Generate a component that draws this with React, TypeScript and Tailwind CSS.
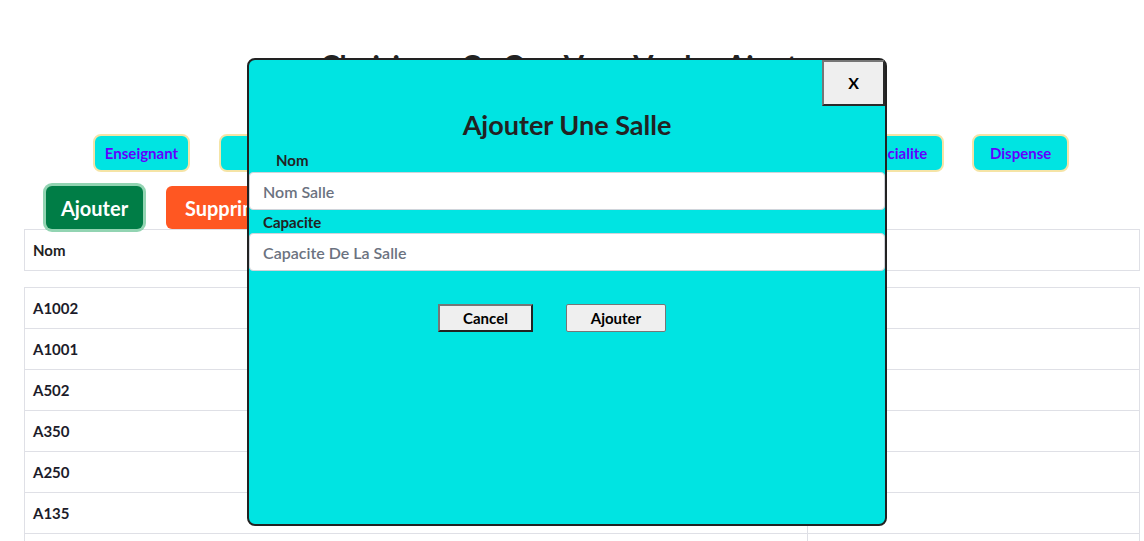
import React from 'react'

const navItems = ["Enseignant", "Salle", "Module", "Groupe", "Section", "Niveau", "Specialite", "Dispense"];

const salles = [
    ["A1002", "60"],
    ["A1001", "60"],
    ["A502", "40"],
    ["A350", "35"],
    ["A250", "30"],
    ["A135", "25"],
    ["A120", "20"],
];

const App = () => {
    return (
        <div className="relative w-full h-[541px] overflow-hidden bg-white text-[#222] font-['Lato','Noto_Sans',sans-serif]">
            <h1 className="pt-[45px] text-center text-[29px] leading-[40px] font-bold">Choisissez Ce Que Vous Voulez Ajouter</h1>

            <div className="flex gap-[28.6px] pl-[93px] mt-[49px]">
                {navItems.map((item) => (
                    <button key={item} className="w-[97px] h-[38px] rounded-lg border-2 border-[#f5e4a6] bg-[#00e4e2] text-[15px] font-bold text-[#6200ff]">
                        {item}
                    </button>
                ))}
            </div>

            <div className="flex gap-[23px] pl-[46px] mt-[14px]">
                <button className="w-[97px] h-[43px] rounded-md bg-[#007d46] text-white text-[20px] font-bold shadow-[0_0_0_3px_#92d4b2]">Ajouter</button>
                <button className="w-[130px] h-[43px] rounded-md bg-[#ff5722] text-white text-[20px] font-bold">Supprimer</button>
            </div>

            <div className="ml-[24px] w-[1116px]">
                <div className="flex h-[42px] border border-[#dfe0e6] text-[15px] font-bold items-center">
                    <div className="w-[783px] h-full flex items-center px-[8px] border-r border-[#dfe0e6]">Nom</div>
                    <div className="flex-1 px-[8px]">Capacite</div>
                </div>
                <div className="mt-[16px] border-t border-x border-[#dfe0e6]">
                    {salles.map(([nom, cap]) => (
                        <div key={nom} className="flex h-[41px] border-b border-[#dfe0e6] text-[15px] font-bold text-[#1c1c2a]">
                            <div className="w-[783px] flex items-center px-[8px] border-r border-[#dfe0e6]">{nom}</div>
                            <div className="flex-1 flex items-center px-[8px]">{cap}</div>
                        </div>
                    ))}
                </div>
            </div>

            <div className="absolute left-[247px] top-[58px] w-[640px] h-[468px] rounded-lg border-2 border-[#222] bg-[#00e4e2]">
                <button className="absolute top-0 right-0 w-[63px] h-[46px] bg-[#efefef] border-2 border-[#767676] border-r-[#2a2a2a] border-b-[#2a2a2a] text-[16px] font-bold text-black">
                    X
                </button>
                <h2 className="mt-[49px] text-center text-[27px] leading-[32px] font-bold">Ajouter Une Salle</h2>
                <div className="pl-[27px] mt-[9px] text-[15px] leading-[20px] font-bold">Nom</div>
                <input
                    placeholder="Nom Salle"
                    className="block w-full h-[38px] mt-[2px] px-[13px] rounded bg-white border border-[#cfd4da] text-[16px] font-semibold placeholder:text-[#6b7280] outline-none"
                />
                <div className="pl-[14px] mt-[1px] text-[15px] leading-[22px] font-bold">Capacite</div>
                <input
                    placeholder="Capacite De La Salle"
                    className="block w-full h-[38px] px-[13px] rounded bg-white border border-[#cfd4da] text-[16px] font-semibold placeholder:text-[#6b7280] outline-none"
                />
                <div className="flex gap-[33px] pl-[189px] mt-[33px]">
                    <button className="w-[95px] h-[28px] bg-[#efefef] border-2 border-[#767676] border-r-[#222] border-b-[#222] text-[15px] font-bold text-black">Cancel</button>
                    <button className="w-[100px] h-[28px] bg-[#efefef] border border-[#767676] rounded-[2px] text-[15px] font-bold text-black">Ajouter</button>
                </div>
            </div>
        </div>
    );
}

export default App
